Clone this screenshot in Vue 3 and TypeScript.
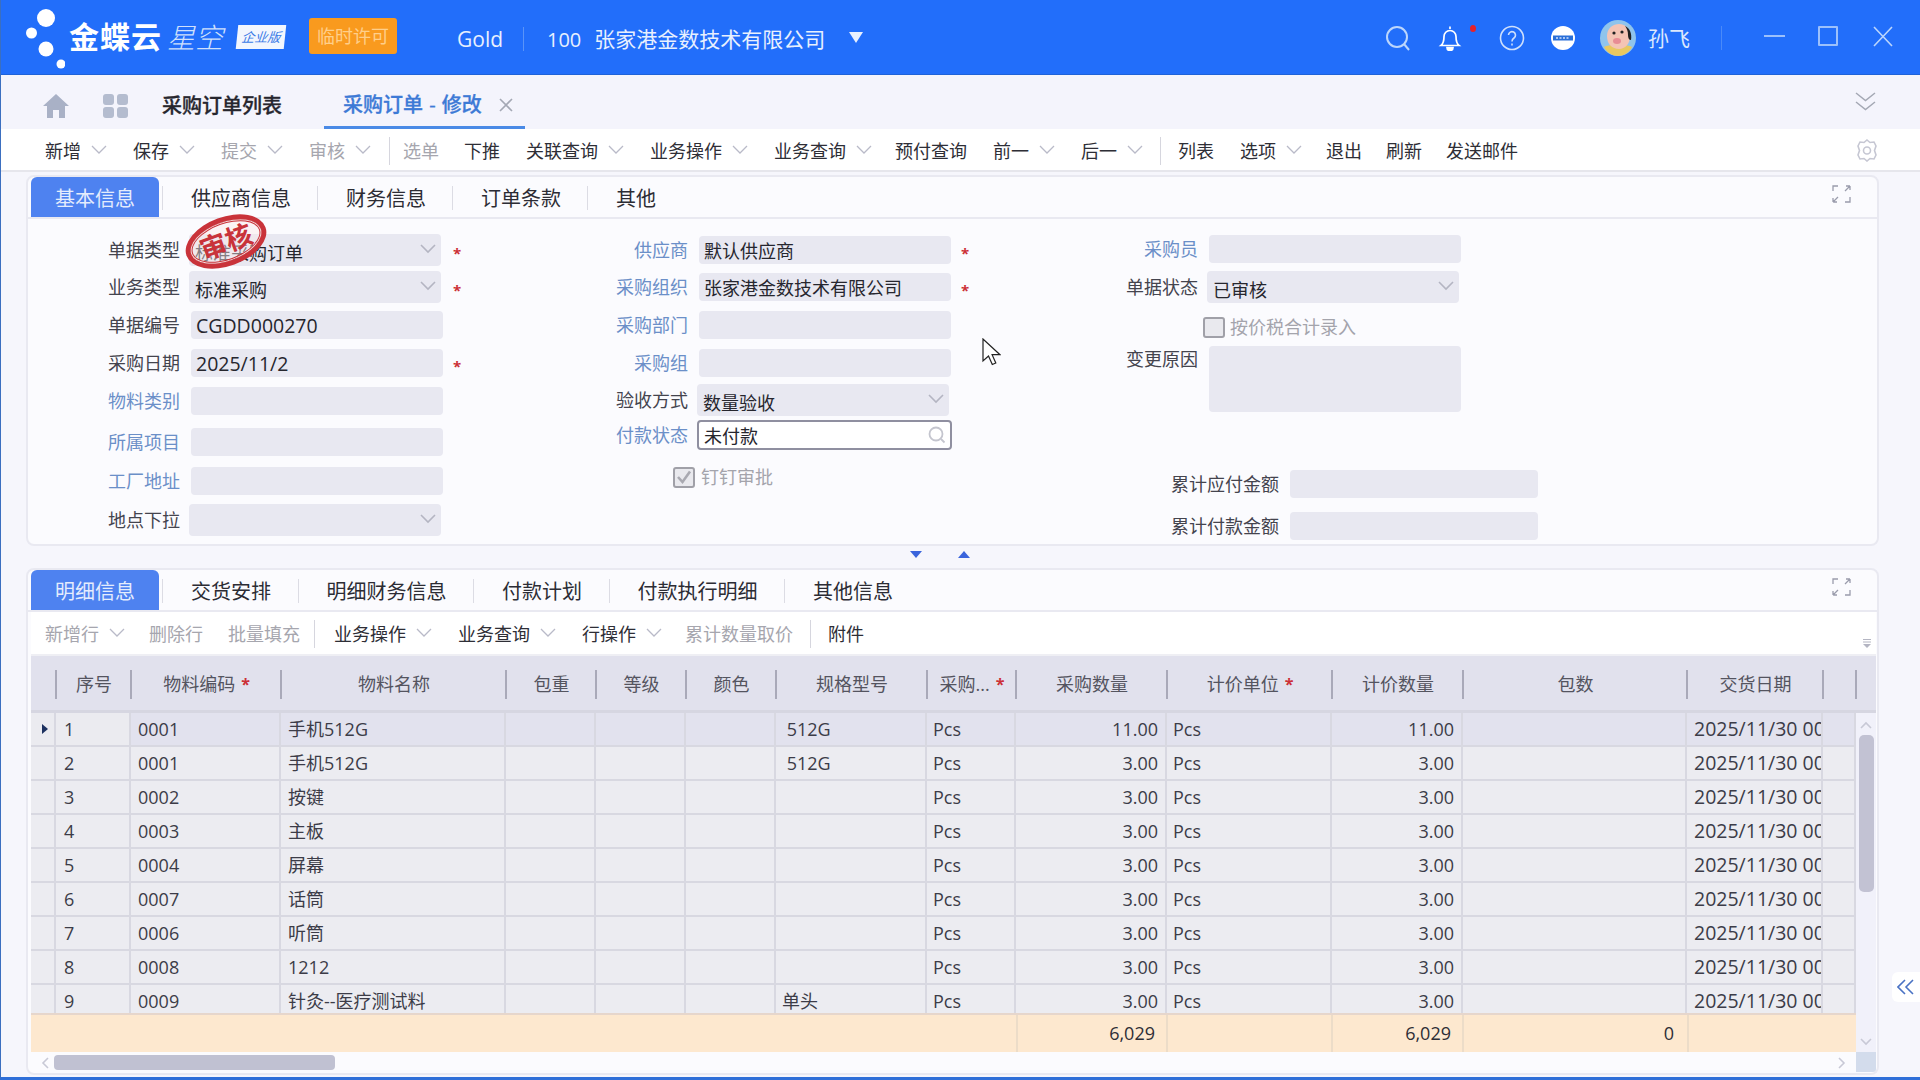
<script setup lang="ts">
type ToolItem = { text: string; caret?: boolean; off?: boolean };
type Field = {
  label?: string;
  kind: 'input' | 'select' | 'focus' | 'check' | 'area' | 'wide';
  gap: number;
  link?: boolean;
  value?: string;
  req?: boolean;
  checked?: boolean;
};
type Row = { no: string; code: string; name: string; spec: string; qty: string };
type Col = { title: string; req?: boolean };

const mainTools: ToolItem[][] = [
  [
    { text: '新增', caret: true },
    { text: '保存', caret: true },
    { text: '提交', caret: true, off: true },
    { text: '审核', caret: true, off: true },
  ],
  [
    { text: '选单', off: true },
    { text: '下推' },
    { text: '关联查询', caret: true },
    { text: '业务操作', caret: true },
    { text: '业务查询', caret: true },
    { text: '预付查询' },
    { text: '前一', caret: true },
    { text: '后一', caret: true },
  ],
  [
    { text: '列表' },
    { text: '选项', caret: true },
    { text: '退出' },
    { text: '刷新' },
    { text: '发送邮件' },
  ],
];

const subTools: ToolItem[][] = [
  [
    { text: '新增行', caret: true, off: true },
    { text: '删除行', off: true },
    { text: '批量填充', off: true },
  ],
  [
    { text: '业务操作', caret: true },
    { text: '业务查询', caret: true },
    { text: '行操作', caret: true },
    { text: '累计数量取价', off: true },
  ],
  [{ text: '附件' }],
];

const topTabs = ['基本信息', '供应商信息', '财务信息', '订单条款', '其他'];
const bottomTabs = ['明细信息', '交货安排', '明细财务信息', '付款计划', '付款执行明细', '其他信息'];

const formCols: Field[][] = [
  [
    { label: '单据类型', kind: 'select', gap: 15, value: '标准采购订单', req: true },
    { label: '业务类型', kind: 'select', gap: 5, value: '标准采购', req: true },
    { label: '单据编号', kind: 'input', gap: 8, value: 'CGDD000270' },
    { label: '采购日期', kind: 'input', gap: 10, value: '2025/11/2', req: true },
    { label: '物料类别', kind: 'input', gap: 10, link: true },
    { label: '所属项目', kind: 'input', gap: 13, link: true },
    { label: '工厂地址', kind: 'input', gap: 11, link: true },
    { label: '地点下拉', kind: 'select', gap: 9 },
  ],
  [
    { label: '供应商', kind: 'input', gap: 17, link: true, value: '默认供应商', req: true },
    { label: '采购组织', kind: 'input', gap: 9, link: true, value: '张家港金数技术有限公司', req: true },
    { label: '采购部门', kind: 'input', gap: 10, link: true },
    { label: '采购组', kind: 'input', gap: 10, link: true },
    { label: '验收方式', kind: 'select', gap: 7, value: '数量验收' },
    { label: '付款状态', kind: 'focus', gap: 4, link: true, value: '未付款' },
    { kind: 'check', gap: 16, value: '钉钉审批', checked: true },
  ],
  [
    { label: '采购员', kind: 'input', gap: 16, link: true },
    { label: '单据状态', kind: 'select', gap: 8, value: '已审核' },
    { kind: 'check', gap: 13, value: '按价税合计录入' },
    { label: '变更原因', kind: 'area', gap: 8 },
    { label: '累计应付金额', kind: 'wide', gap: 58 },
    { label: '累计付款金额', kind: 'wide', gap: 14 },
  ],
];

const columns: Col[] = [
  { title: '' },
  { title: '序号' },
  { title: '物料编码', req: true },
  { title: '物料名称' },
  { title: '包重' },
  { title: '等级' },
  { title: '颜色' },
  { title: '规格型号' },
  { title: '采购...', req: true },
  { title: '采购数量' },
  { title: '计价单位', req: true },
  { title: '计价数量' },
  { title: '包数' },
  { title: '交货日期' },
  { title: '' },
];

const rows: Row[] = [
  { no: '1', code: '0001', name: '手机512G', spec: ' 512G', qty: '11.00' },
  { no: '2', code: '0001', name: '手机512G', spec: ' 512G', qty: '3.00' },
  { no: '3', code: '0002', name: '按键', spec: '', qty: '3.00' },
  { no: '4', code: '0003', name: '主板', spec: '', qty: '3.00' },
  { no: '5', code: '0004', name: '屏幕', spec: '', qty: '3.00' },
  { no: '6', code: '0007', name: '话筒', spec: '', qty: '3.00' },
  { no: '7', code: '0006', name: '听筒', spec: '', qty: '3.00' },
  { no: '8', code: '0008', name: '1212', spec: '', qty: '3.00' },
  { no: '9', code: '0009', name: '针灸--医疗测试料', spec: '单头', qty: '3.00' },
];

// codes and dates in the form run a bit larger than the chinese text
const isLatin = (value?: string) => !!value && /^[\x00-\x7f]+$/.test(value);
</script>

<template>
  <div class="page">
    <header class="topbar">
      <div class="logo">
        <svg class="logo-dots" width="40" height="66" viewBox="0 0 40 66">
          <circle cx="21" cy="13" r="9" fill="#fff" />
          <circle cx="6.5" cy="28" r="5.5" fill="#fff" />
          <circle cx="21" cy="44" r="7.5" fill="#fff" />
          <circle cx="36" cy="59" r="4.5" fill="#fff" />
        </svg>
        <span class="logo-main">金蝶云</span>
        <span class="logo-sub">星空</span>
        <span class="logo-badge">企业版</span>
      </div>
      <span class="license">临时许可</span>
      <span class="db">Gold</span>
      <span class="org"><span class="org-no">100</span>张家港金数技术有限公司</span>
      <i class="org-caret"></i>
      <div class="top-right">
        <svg class="tr-search" width="26" height="26" viewBox="0 0 26 26" fill="none" stroke="#bcd6fc" stroke-width="2">
          <circle cx="12" cy="12" r="10" />
          <path d="M19 19l5 6" />
        </svg>
        <span class="bell">
          <svg width="26" height="26" viewBox="0 0 26 26" fill="none" stroke="#fff" stroke-width="1.7">
            <path d="M13 1.5v2.5M4 20.5c2.5-2 3-4.5 3-9a6 6 0 0 1 12 0c0 4.500.5 7 3 9z" />
            <path d="M10 22.500a3 3 0 0 0 6 0z" fill="#fff" />
          </svg>
          <i class="bell-dot"></i>
        </span>
        <svg class="tr-help" width="26" height="26" viewBox="0 0 26 26" fill="none" stroke="#cfe0fc" stroke-width="1.6">
          <circle cx="13" cy="13" r="11.500" />
          <path d="M9.500 10a3.500 3.500 0 1 1 5.500 3c-1.500 1-2 1.500-2 3.500" />
          <path d="M13 18.500v2" />
        </svg>
        <svg class="tr-dots" width="26" height="26" viewBox="0 0 26 26">
          <circle cx="13" cy="13" r="12" fill="#fff" />
          <rect x="3" y="10.500" width="20" height="5" fill="#2a6fd8" />
          <path d="M6 13h14" stroke="#cfe0fc" stroke-width="1.500" stroke-dasharray="2 1.500" />
        </svg>
        <svg class="avatar" width="36" height="36" viewBox="0 0 36 36">
          <circle cx="18" cy="18" r="18" fill="#8fc4ec" />
          <path d="M4 27c4-3 24-3 28 0-3 6-9 9-14 9S7 33 4 27z" fill="#e8c860" />
          <path d="M7 16c0-8 6-12 12-12 7 0 11 5 11 12 0 8-5 13-11 13-7 0-12-5-12-13z" fill="#f4c4b4" />
          <path d="M25 6c5 2 7 8 6 14-2 0-3-2-3-5 0-4-1-6-3-9z" fill="#222" />
          <circle cx="14" cy="13" r="1.600" fill="#222" />
          <circle cx="22" cy="12" r="1.600" fill="#222" />
          <ellipse cx="17" cy="21" rx="4" ry="3" fill="#e88c94" />
        </svg>
        <span class="user">孙飞</span>
        <i class="tr-sep"></i>
        <i class="win-min"></i>
        <i class="win-max"></i>
        <svg class="win-close" width="20" height="21" viewBox="0 0 20 21" stroke="#bcd6fc" stroke-width="1.600">
          <path d="M1 1l18 19M19 1L1 20" />
        </svg>
      </div>
    </header>

    <nav class="tabbar">
      <svg class="home" width="26" height="24" viewBox="0 0 26 24" fill="#a9b1c6">
        <path d="M13 0L0 12h4v12h6v-8h6v8h6V12h4z" />
      </svg>
      <span class="apps"><i></i><i></i><i></i><i></i></span>
      <span class="nav-tab">采购订单列表</span>
      <span class="nav-tab active">采购订单 - 修改
        <svg width="14" height="14" viewBox="0 0 14 14" stroke="#a4a8b4" stroke-width="1.600">
          <path d="M1 1l12 12M13 1L1 13" />
        </svg>
      </span>
      <svg class="chev-double" width="21" height="19" viewBox="0 0 21 19" fill="none" stroke="#a4a8b4" stroke-width="1.500">
        <path d="M1 1l9.500 7.500L20 1M1 10l9.500 7.500L20 10" />
      </svg>
    </nav>

    <div class="toolbar main-bar">
      <div v-for="(group, gi) in mainTools" :key="gi" class="tool-group">
        <span
          v-for="item in group"
          :key="item.text"
          :class="{ 'tool-item': true, off: item.off, plain: !item.caret }"
        >
          {{ item.text }}
          <svg v-if="item.caret" class="caret" width="16" height="10" viewBox="0 0 16 10" fill="none" stroke="#b9bac8" stroke-width="1.300">
            <path d="M1 1l7 7 7-7" />
          </svg>
        </span>
      </div>
      <svg class="gear" width="22" height="23" viewBox="0 0 22 23" fill="none" stroke="#c6c7d3" stroke-width="1.600">
        <path d="M11 1l3 2.500 4-.5 2 4-1.500 4.500L20 16l-2 4-4-.5-3 2.500-3-2.500-4 .5-2-4 1.500-4.500L2 7l2-4 4 .5z" />
        <circle cx="11" cy="11.500" r="3.500" />
      </svg>
    </div>

    <main class="content">
      <section class="panel top-panel">
        <div class="panel-tabs">
          <span v-for="(tab, i) in topTabs" :key="tab" :class="{ 'p-tab': true, active: i === 0 }">{{ tab }}</span>
          <svg class="expand" width="19" height="18" viewBox="0 0 19 18" fill="none" stroke="#9a9cac" stroke-width="1.300">
            <path d="M1 6V1h5M18 1l-5 5M18 1v4M18 1h-4M1 17l5-5M1 17v-4M1 17h4M18 12v5h-5" />
          </svg>
        </div>
        <div class="form">
          <div v-for="(col, ci) in formCols" :key="ci" :class="['form-col', 'col' + ci]">
            <div
              v-for="(f, fi) in col"
              :key="fi"
              :class="['field', 'k-' + f.kind]"
              :style="{ marginTop: f.gap + 'px' }"
            >
              <template v-if="f.kind === 'check'">
                <span class="check-box">
                  <svg v-if="f.checked" width="18" height="18" viewBox="0 0 18 18" fill="none" stroke="#a9a9b1" stroke-width="2.600">
                    <path d="M3 9l4.500 5L15 3.500" />
                  </svg>
                </span>
                <span class="check-text">{{ f.value }}</span>
              </template>
              <template v-else>
                <label :class="{ 'f-label': true, link: f.link }">{{ f.label }}</label>
                <div class="control">
                  <span :class="{ 'control-text': true, latin: isLatin(f.value) }">{{ f.value }}</span>
                  <svg v-if="f.kind === 'select'" class="sel-caret" width="16" height="10" viewBox="0 0 16 10" fill="none" stroke="#b4b5c2" stroke-width="1.600">
                    <path d="M1 1l7 7 7-7" />
                  </svg>
                  <svg v-if="f.kind === 'focus'" class="find" width="18" height="18" viewBox="0 0 18 18" fill="none" stroke="#c4c5ce" stroke-width="1.800">
                    <circle cx="8" cy="8" r="6.500" />
                    <path d="M13 13l3.500 3.500" />
                  </svg>
                </div>
                <span v-if="f.req" class="star">*</span>
              </template>
            </div>
          </div>
        </div>
        <div class="stamp"><span>审核</span></div>
      </section>

      <div class="splitter">
        <i class="arrow-down"></i>
        <i class="arrow-up"></i>
      </div>

      <section class="panel bottom-panel">
        <div class="panel-tabs">
          <span v-for="(tab, i) in bottomTabs" :key="tab" :class="{ 'p-tab': true, active: i === 0 }">{{ tab }}</span>
          <svg class="expand" width="19" height="18" viewBox="0 0 19 18" fill="none" stroke="#9a9cac" stroke-width="1.300">
            <path d="M1 6V1h5M18 1l-5 5M18 1v4M18 1h-4M1 17l5-5M1 17v-4M1 17h4M18 12v5h-5" />
          </svg>
        </div>
        <div class="toolbar sub-bar">
          <div v-for="(group, gi) in subTools" :key="gi" class="tool-group">
            <span
              v-for="item in group"
              :key="item.text"
              :class="{ 'tool-item': true, off: item.off, plain: !item.caret }"
            >
              {{ item.text }}
              <svg v-if="item.caret" class="caret" width="16" height="10" viewBox="0 0 16 10" fill="none" stroke="#b9bac8" stroke-width="1.300">
                <path d="M1 1l7 7 7-7" />
              </svg>
            </span>
          </div>
          <svg class="more" width="8" height="9" viewBox="0 0 8 9">
            <path d="M0 .5h8M0 3h8" stroke="#b4b5c2" stroke-width="1" />
            <path d="M0 5h8L4 9z" fill="#b4b5c2" />
          </svg>
        </div>

        <div class="grid-wrap">
          <div class="grid-head">
            <div v-for="(c, i) in columns" :key="i" class="head-cell">
              <span>{{ c.title }}</span>
              <b v-if="c.req" class="star">*</b>
            </div>
          </div>
          <div class="grid-body">
            <div class="grid-left">
              <div class="rows">
                <div v-for="(r, i) in rows" :key="i" :class="{ 'grid-row': true, current: i === 0 }">
                  <div class="cell mark"><i v-if="i === 0" class="row-arrow"></i></div>
                  <div class="cell seq">{{ r.no }}</div>
                  <div class="cell">{{ r.code }}</div>
                  <div class="cell">{{ r.name }}</div>
                  <div class="cell"></div>
                  <div class="cell"></div>
                  <div class="cell"></div>
                  <div class="cell spec">{{ r.spec }}</div>
                  <div class="cell">Pcs</div>
                  <div class="cell num">{{ r.qty }}</div>
                  <div class="cell">Pcs</div>
                  <div class="cell num">{{ r.qty }}</div>
                  <div class="cell"></div>
                  <div class="cell date">2025/11/30 00:00:00</div>
                  <div class="cell tail"></div>
                </div>
              </div>
              <div class="sum-row">
                <div class="sum-cell"></div>
                <div class="sum-cell num">6,029</div>
                <div class="sum-cell"></div>
                <div class="sum-cell num">6,029</div>
                <div class="sum-cell num">0</div>
                <div class="sum-cell last"></div>
              </div>
            </div>
            <div class="vscroll">
              <svg width="14" height="8" viewBox="0 0 14 8" fill="none" stroke="#c8c9d6" stroke-width="1.600">
                <path d="M2 7l5-5 5 5" />
              </svg>
              <i class="v-thumb"></i>
              <svg class="v-down" width="14" height="8" viewBox="0 0 14 8" fill="none" stroke="#c8c9d6" stroke-width="1.600">
                <path d="M2 1l5 5 5-5" />
              </svg>
            </div>
          </div>
          <div class="hscroll">
            <svg class="h-left" width="8" height="14" viewBox="0 0 8 14" fill="none" stroke="#c8c9d6" stroke-width="1.600">
              <path d="M7 2L2 7l5 5" />
            </svg>
            <i class="h-thumb"></i>
            <svg class="h-right" width="8" height="14" viewBox="0 0 8 14" fill="none" stroke="#c8c9d6" stroke-width="1.600">
              <path d="M1 2l5 5-5 5" />
            </svg>
            <i class="corner"></i>
          </div>
        </div>
      </section>
    </main>

    <div class="collapse-btn">
      <svg width="18" height="16" viewBox="0 0 18 16" fill="none" stroke="#4a72c4" stroke-width="1.600">
        <path d="M8 1L1 8l7 7M16 1L9 8l7 7" />
      </svg>
    </div>

    <svg class="cursor" width="19" height="28" viewBox="0 0 19 28">
      <path d="M1 1v22l5.500-5 3.800 8.500 3.500-1.500-3.700-8.300H18z" fill="#fff" stroke="#222" stroke-width="1.200" />
    </svg>
  </div>
</template>

<style scoped>
.page {
  position: relative;
  width: 1920px;
  height: 1080px;
  overflow: hidden;
  display: flex;
  flex-direction: column;
  background: #f6f6fc;
  border-left: 1px solid #3b6fc0;
  border-bottom: 3px solid #2f6fd8;
  box-sizing: border-box;
  font-family: 'Open Sans', 'Noto Sans CJK SC', sans-serif;
  font-size: 18px;
  color: #333340;
}

/* top header */
.topbar {
  height: 75px;
  flex: none;
  display: flex;
  align-items: center;
  background: #226efa;
  border-bottom: 1px solid #1f62d8;
  box-sizing: border-box;
  color: #fff;
}

.logo {
  width: 308px;
  height: 75px;
  position: relative;
  display: flex;
  align-items: center;
  padding-left: 68px;
  box-sizing: border-box;
}

.logo-dots {
  position: absolute;
  left: 24px;
  top: 5px;
}

.logo-main {
  font-size: 30px;
  font-weight: 700;
  line-height: 34px;
  letter-spacing: 1px;
  margin-top: -1px;
}

.logo-sub {
  font-size: 28px;
  font-style: italic;
  line-height: 34px;
  margin-left: 5px;
  color: #cfe0fc;
  font-weight: 300;
}

.logo-badge {
  margin-left: 14px;
  width: 48px;
  height: 24px;
  background: #f2f6fe;
  color: #3a7ae6;
  font-size: 13px;
  line-height: 24px;
  text-align: center;
  font-style: italic;
  transform: skewX(-6deg);
}

.license {
  width: 88px;
  height: 36px;
  line-height: 36px;
  text-align: center;
  background: #f99a1e;
  color: #ffcf8a;
  border-radius: 3px;
  font-size: 18px;
  margin-top: -3px;
}

.db {
  margin-left: 60px;
  width: 66px;
  font-size: 21px;
  line-height: 24px;
  height: 24px;
  margin-top: 4px;
  border-right: 1px solid #5a94f8;
  color: #e8f0fe;
}

.org {
  margin-left: 23px;
  font-size: 21px;
  line-height: 28px;
  color: #e8f0fe;
  margin-top: 4px;
}

.org-no {
  font-size: 20px;
  margin-right: 13px;
}

.org-caret {
  width: 0;
  height: 0;
  margin-left: 24px;
  margin-top: 0;
  border-left: 7px solid transparent;
  border-right: 7px solid transparent;
  border-top: 11px solid #e8f0fe;
}

.top-right {
  margin-left: auto;
  display: flex;
  align-items: center;
  padding-right: 27px;
  margin-top: 2px;
}

.tr-help {
  margin-left: 36px;
}

.tr-dots {
  margin-left: 25px;
}

.bell {
  margin-left: 26px;
  position: relative;
  display: flex;
}

.bell-dot {
  position: absolute;
  left: 33px;
  top: 0;
  width: 6px;
  height: 7px;
  border-radius: 50%;
  background: #e6212a;
}

.avatar {
  margin-left: 24px;
}

.user {
  margin-left: 12px;
  font-size: 21px;
  line-height: 28px;
  color: #dce8fd;
}

.tr-sep {
  width: 1px;
  height: 24px;
  background: #4a8af8;
  margin-left: 31px;
}

.win-min {
  width: 21px;
  height: 2px;
  background: #9cc0fb;
  margin-left: 42px;
  margin-top: -4px;
}

.win-max {
  width: 20px;
  height: 20px;
  border: 2px solid #9cc0fb;
  box-sizing: border-box;
  margin-left: 33px;
  border-radius: 1px;
  margin-top: -4px;
}

.win-close {
  margin-left: 35px;
  margin-top: -3px;
}

/* nav tabs */
.tabbar {
  height: 54px;
  flex: none;
  display: flex;
  align-items: center;
  background: #f4f4fc;
  position: relative;
  padding-left: 42px;
  box-sizing: border-box;
}

.home {
  margin-top: 8px;
}

.apps {
  margin-left: 34px;
  margin-top: 8px;
  width: 25px;
  height: 24px;
  display: grid;
  grid-template-columns: 11px 11px;
  grid-template-rows: 11px 11px;
  gap: 2px 3px;
}

.apps i {
  background: #b4bccf;
  border-radius: 3px;
}

.nav-tab {
  font-size: 20px;
  font-weight: 500;
  line-height: 28px;
  margin-left: 34px;
  margin-top: 8px;
  color: #26262e;
  -webkit-text-stroke: 0.3px #26262e;
}

.nav-tab.active {
  height: 54px;
  margin-left: 42px;
  margin-top: 0;
  width: 201px;
  padding: 8px 0 0 19px;
  box-sizing: border-box;
  color: #3d7ad6;
  -webkit-text-stroke: 0.3px #3d7ad6;
  border-bottom: 3px solid #4a8ae6;
  white-space: pre;
  word-spacing: 1px;
  display: flex;
  align-items: center;
  gap: 11px;
}

.chev-double {
  position: absolute;
  right: 44px;
  top: 17px;
}

/* toolbars */
.toolbar {
  display: flex;
  align-items: center;
  background: #fff;
  box-sizing: border-box;
}

.main-bar {
  height: 43px;
  flex: none;
  padding: 2px 42px 0 44px;
  border-bottom: 2px solid #e6e6ec;
}

.sub-bar {
  height: 44px;
  padding: 2px 0 0 14px;
  border-bottom: 2px solid #efeff4;
  position: relative;
}

.tool-group {
  display: flex;
  align-items: center;
  height: 28px;
  padding: 0 18px 0 15px;
  border-right: 1px solid #d6d6de;
}

.tool-group:first-child {
  padding-left: 0;
}

.tool-group:last-of-type {
  border-right: none;
  padding-left: 17px;
}

.tool-item {
  display: flex;
  align-items: center;
  margin-right: 26px;
  line-height: 26px;
  color: #2e2e36;
  white-space: nowrap;
}

.tool-item:last-child {
  margin-right: 0;
}

/* hand-tuned pitches, the toolbar in the shot isn't perfectly even */
.main-bar .tool-group:nth-child(2) {
  padding: 0 17px 0 13px;
}

.main-bar .tool-group:nth-child(2) .tool-item:first-child {
  margin-right: 25px;
}

.main-bar .tool-group:nth-child(2) .tool-item:nth-child(5) {
  margin-right: 23px;
}

.main-bar .tool-group:last-of-type .tool-item:nth-child(2),
.main-bar .tool-group:last-of-type .tool-item:nth-child(3),
.main-bar .tool-group:last-of-type .tool-item:nth-child(4) {
  margin-right: 24px;
}

.sub-bar .tool-group:first-child {
  padding-right: 14px;
}

.sub-bar .tool-group:first-child .tool-item:first-child {
  margin-right: 24px;
}

.sub-bar .tool-group:first-child .tool-item:nth-child(2) {
  margin-right: 25px;
}

.sub-bar .tool-group:nth-child(2) {
  padding-left: 19px;
  padding-right: 17px;
}

.sub-bar .tool-group:nth-child(2) .tool-item:nth-child(3) {
  margin-right: 23px;
}

.tool-item.off {
  color: #a6a6ae;
}

.caret {
  margin-left: 10px;
  margin-top: -2px;
}

.gear {
  margin-left: auto;
}

.more {
  position: absolute;
  right: 5px;
  bottom: 6px;
}

/* page body */
.content {
  flex: 1;
  width: 1853px;
  margin-left: 25px;
  padding-top: 3px;
  box-sizing: content-box;
  display: flex;
  flex-direction: column;
  min-height: 0;
}

.panel {
  position: relative;
  background: #fbfbfe;
  border: 2px solid #e9e9f1;
  border-radius: 8px;
  box-sizing: border-box;
  padding: 0 1px 0 3px;
}

.top-panel {
  height: 371px;
  flex: none;
}

.bottom-panel {
  flex: 1;
  min-height: 0;
  margin-bottom: 2px;
}

.panel-tabs {
  height: 42px;
  padding-top: 1px;
  margin: 0 -1px 0 -3px;
  padding-left: 3px;
  display: flex;
  align-items: flex-end;
  border-bottom: 2px solid #e9e9f1;
  box-sizing: border-box;
  position: relative;
}

.p-tab {
  height: 40px;
  line-height: 43px;
  font-size: 20px;
  padding: 0 27px 0 28px;
  color: #2c2c34;
  position: relative;
  white-space: nowrap;
}

.bottom-panel .p-tab {
  padding-right: 27.5px;
}

.p-tab::after {
  content: '';
  position: absolute;
  right: 0;
  top: 9px;
  height: 24px;
  width: 1px;
  background: #dcdce4;
}

.p-tab:last-of-type::after {
  display: none;
}

.p-tab.active,
.bottom-panel .p-tab.active {
  width: 128px;
  padding: 0;
  text-align: center;
  background: #4e82f0;
  color: #e4ecfd;
  border-radius: 6px 6px 0 0;
  margin-right: 4px;
}

.p-tab.active::after {
  right: -4px;
}

.expand {
  position: absolute;
  left: 1804px;
  top: 8px;
}

/* form */
.form {
  display: flex;
  margin-left: -3px;
}

.form-col {
  display: flex;
  flex-direction: column;
  flex: none;
}

.col0 {
  width: 508px;
}

.col1 {
  width: 510px;
}

.field {
  display: flex;
  align-items: center;
  height: 28px;
  flex: none;
}

.f-label {
  width: 152px;
  flex: none;
  text-align: right;
  line-height: 24px;
  white-space: nowrap;
  color: #44444e;
}

.f-label.link {
  color: #6b8fc8;
}

.control {
  position: relative;
  width: 252px;
  height: 100%;
  margin-left: 11px;
  background: #e8e8f1;
  border-radius: 4px;
  padding-left: 5px;
  box-sizing: border-box;
  flex: none;
  display: flex;
  align-items: center;
}

.control-text {
  line-height: 24px;
  color: #26262e;
  white-space: nowrap;
  position: relative;
  top: 1px;
}

.control-text.latin {
  font-size: 19.5px;
}

.field.k-select {
  height: 32px;
}

.k-select .control {
  margin-left: 9px;
  margin-right: 2px;
  padding-left: 6px;
}

.k-select .control-text {
  top: 3px;
}

.sel-caret {
  position: absolute;
  right: 5px;
  top: 10px;
}

.field.k-focus {
  height: 30px;
}

.k-focus .control {
  width: 255px;
  margin-left: 9px;
  background: #fff;
  border: 2px solid #8f8fa0;
  padding-left: 5px;
}

.find {
  position: absolute;
  right: 4px;
  top: 4px;
}

.star {
  color: #cc2f36;
  font-size: 15px;
  font-weight: 700;
  line-height: 20px;
  margin-left: 10px;
  margin-top: 5px;
}

.field.k-check {
  height: 22px;
}

.col1 .k-check {
  margin-left: 137px;
}

.col2 .k-check {
  margin-left: 157px;
}

.check-box {
  width: 22px;
  height: 21px;
  border: 2px solid #a0a0a8;
  border-radius: 3px;
  background: #e9e9ee;
  box-sizing: border-box;
  display: flex;
  align-items: center;
  justify-content: center;
}

.check-text {
  margin-left: 6px;
  color: #a4a4ac;
  line-height: 24px;
}

.col2 .check-text {
  margin-left: 5px;
}

.field.k-area {
  height: 66px;
  align-items: flex-start;
}

.k-area .f-label {
  margin-top: 1px;
}

.field.k-wide .f-label {
  width: 233px;
}

.field.k-wide .control {
  width: 248px;
  margin-left: 11px;
}

.stamp {
  position: absolute;
  left: 156px;
  top: 40px;
  width: 84px;
  height: 49px;
  border: 5px solid #c9333a;
  border-radius: 50%;
  box-sizing: border-box;
  transform: rotate(-20deg);
  background: rgba(250, 232, 232, 0.45);
  display: flex;
  align-items: center;
  justify-content: center;
  box-shadow: inset 0 0 0 1px #f3dcdc, inset 0 0 0 2px #c9333a;
}

.stamp span {
  color: #c9333a;
  font-size: 27px;
  font-weight: 700;
  line-height: 28px;
  white-space: nowrap;
}

.splitter {
  height: 22px;
  flex: none;
  display: flex;
  align-items: center;
  padding: 0 0 5px 884px;
  gap: 36px;
  box-sizing: border-box;
}

.arrow-down {
  width: 0;
  height: 0;
  border-left: 6px solid transparent;
  border-right: 6px solid transparent;
  border-top: 7px solid #3a64dc;
}

.arrow-up {
  width: 0;
  height: 0;
  border-left: 6px solid transparent;
  border-right: 6px solid transparent;
  border-bottom: 7px solid #3a64dc;
}

/* grid */
.grid-wrap {
  width: 1845px;
  font-size: 18px;
}

.grid-head,
.grid-row {
  display: grid;
  grid-template-columns: 25px 75px 150px 225px 90px 90px 90px 151px 89px 151px 165px 131px 224px 136px 33px;
}

.grid-head {
  height: 57px;
  padding-right: 20px;
  background: #e1e1ed;
  border-bottom: 3px solid #d6d6e1;
  box-sizing: border-box;
}

.head-cell {
  position: relative;
  display: flex;
  align-items: center;
  justify-content: center;
  padding: 2px 0 0 1px;
  line-height: 24px;
  color: #54545f;
  white-space: nowrap;
}

.head-cell::after {
  content: '';
  position: absolute;
  right: -1px;
  top: 14px;
  height: 29px;
  width: 2px;
  background: #a9a9b9;
}

.head-cell .star {
  font-size: 16px;
  margin: 0 0 0 6px;
}

.grid-body {
  display: flex;
}

.grid-left {
  width: 1825px;
  flex: none;
}

.rows {
  height: 300px;
  overflow: hidden;
}

.grid-row {
  height: 34px;
  background: #ececf1;
}

.cell {
  height: 34px;
  line-height: 32px;
  padding: 0 6px;
  border-right: 2px solid #d8d8e1;
  border-bottom: 2px solid #d8d8e1;
  box-sizing: border-box;
  overflow: hidden;
  white-space: pre;
  color: #3c3c48;
}

.grid-row .cell:nth-child(3),
.grid-row .cell:nth-child(4) {
  padding-left: 7px;
}

.grid-row.current .cell {
  background: #e2e2ee;
}

.grid-row.current .cell.mark,
.grid-row.current .cell.seq {
  background: #ebebf0;
}

.cell.mark {
  position: relative;
}

.cell.seq {
  padding-left: 8px;
}

.cell.num {
  text-align: right;
  padding-right: 7px;
}

.cell.date {
  font-size: 19.5px;
  padding-left: 7px;
  padding-right: 0;
}

.row-arrow {
  position: absolute;
  left: 11px;
  top: 11px;
  border-top: 5px solid transparent;
  border-bottom: 5px solid transparent;
  border-left: 6px solid #1d3160;
}

.sum-row {
  display: grid;
  grid-template-columns: 987px 150px 165px 131px 225px 167px;
  height: 39px;
  background: #fde8cf;
  border-top: 2px solid #e6d6cc;
  box-sizing: border-box;
}

.sum-cell {
  line-height: 36px;
  border-right: 2px solid #ecdcc8;
  color: #2e2e36;
  padding-right: 11px;
  box-sizing: border-box;
}

.sum-cell.num {
  text-align: right;
}

.sum-cell:nth-child(5) {
  padding-right: 13px;
}

.sum-cell.last {
  border-right: none;
}

.vscroll {
  width: 20px;
  height: 339px;
  background: #f1f1fa;
  position: relative;
  display: flex;
  flex-direction: column;
  align-items: center;
  padding-top: 8px;
  box-sizing: border-box;
}

.v-thumb {
  width: 15px;
  height: 157px;
  margin-top: 6px;
  background: #c2c2d3;
  border-radius: 5px;
}

.v-down {
  margin-top: auto;
  margin-bottom: 6px;
}

.hscroll {
  height: 21px;
  position: relative;
  display: flex;
  align-items: center;
}

.h-left {
  margin-left: 10px;
}

.h-thumb {
  width: 281px;
  height: 15px;
  margin-left: 5px;
  background: #c0c1d2;
  border-radius: 4px;
}

.h-right {
  margin-left: auto;
  margin-right: 10px;
}

.corner {
  width: 20px;
  height: 20px;
  background: #d3dcec;
  border-radius: 0 0 3px 0;
  align-self: flex-start;
}

.collapse-btn {
  position: absolute;
  right: 0;
  top: 972px;
  width: 28px;
  height: 30px;
  background: #fff;
  border-radius: 6px 0 0 6px;
  display: flex;
  align-items: center;
  padding-left: 5px;
  box-sizing: border-box;
}

.cursor {
  position: absolute;
  left: 981px;
  top: 338px;
}
</style>

<style>
html,
body {
  margin: 0;
  background: #f6f6fc;
}
</style>
